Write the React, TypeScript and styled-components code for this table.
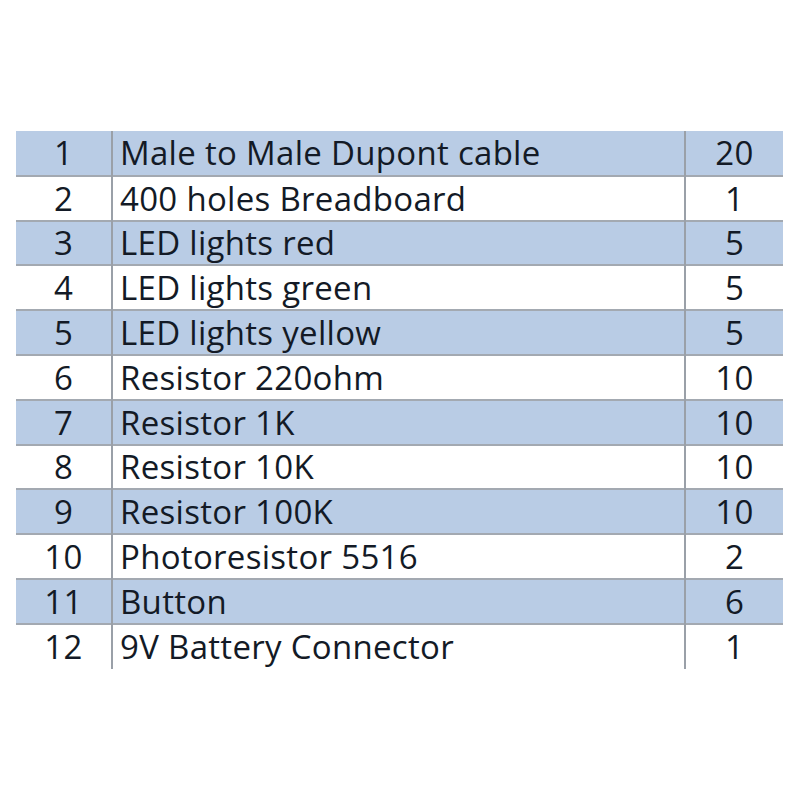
import React from 'react';
import styled, { createGlobalStyle } from 'styled-components';

const GlobalStyle = createGlobalStyle`
  html, body {
    margin: 0;
    padding: 0;
    background: #ffffff;
  }
`;

const items: [string, string, string][] = [
  ['1', 'Male to Male Dupont cable', '20'],
  ['2', '400 holes Breadboard', '1'],
  ['3', 'LED lights red', '5'],
  ['4', 'LED lights green', '5'],
  ['5', 'LED lights yellow', '5'],
  ['6', 'Resistor 220ohm', '10'],
  ['7', 'Resistor 1K', '10'],
  ['8', 'Resistor 10K', '10'],
  ['9', 'Resistor 100K', '10'],
  ['10', 'Photoresistor 5516', '2'],
  ['11', 'Button', '6'],
  ['12', '9V Battery Connector', '1'],
];

const App: React.FC = () => {
  return (
    <Page>
      <GlobalStyle />
      <PartsTable>
        <tbody>
          {items.map(([no, name, qty], i) => (
            <Row key={no} shaded={i % 2 === 0} last={i === items.length - 1}>
              <NumCell>{no}</NumCell>
              <NameCell>{name}</NameCell>
              <QtyCell>{qty}</QtyCell>
            </Row>
          ))}
        </tbody>
      </PartsTable>
    </Page>
  );
};

const Page = styled.div`
  width: 800px;
  height: 800px;
  padding: 131px 17px 0 16px;
  box-sizing: border-box;
  background: #ffffff;
`;

const PartsTable = styled.table`
  width: 767px;
  border-collapse: collapse;
  table-layout: fixed;
  font-family: 'Open Sans', 'Liberation Sans', sans-serif;
  font-size: 33px;
  letter-spacing: 0.3px;
  color: #131a26;
`;

const Row = styled.tr<{ shaded: boolean; last: boolean }>`
  height: 44.8px;
  line-height: 1;
  background: ${({ shaded }) => (shaded ? '#b9cce5' : '#ffffff')};
  border-bottom: ${({ last }) => (last ? 'none' : '2px solid #a3a9b1')};
`;

const NumCell = styled.td`
  width: 95px;
  padding: 0;
  text-align: center;
  border-right: 2px solid #9aa0a8;
`;

const NameCell = styled.td`
  padding: 0 0 0 7px;
  text-align: left;
  white-space: nowrap;
`;

const QtyCell = styled.td`
  width: 97px;
  padding: 0;
  text-align: center;
  border-left: 2px solid #9aa0a8;
`;

export default App;
